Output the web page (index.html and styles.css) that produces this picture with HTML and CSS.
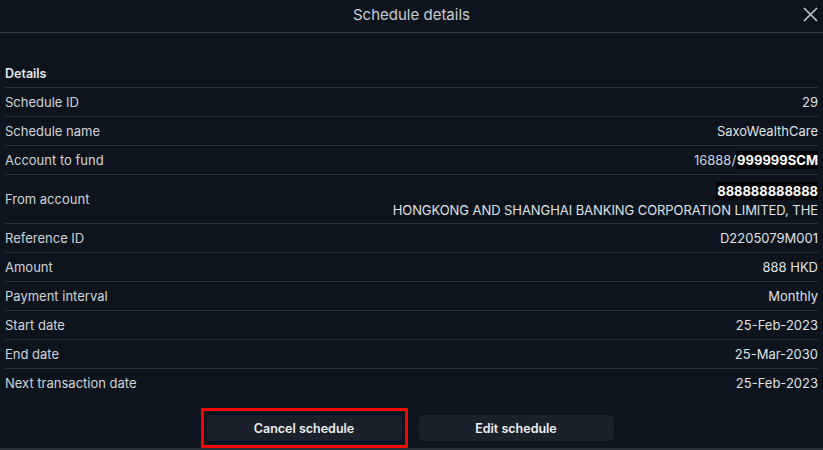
FILE: index.html
```html
<!DOCTYPE html>
<html>
<head>
<meta charset="utf-8">
<link rel="stylesheet" href="styles.css">
</head>
<body>
<div class="dialog">
  <header class="head">
    <div class="title">Schedule details</div>
    <button class="close" aria-label="Close">
      <svg width="15" height="15" viewBox="0 0 15 15"><path d="M1 1L14 14M14 1L1 14" stroke="#c4c8ce" stroke-width="1.6" fill="none"/></svg>
    </button>
  </header>
  <div class="body">
    <div class="row section"><span class="label">Details</span></div>
    <div class="row"><span class="label">Schedule ID</span><span class="value">29</span></div>
    <div class="row"><span class="label">Schedule name</span><span class="value">SaxoWealthCare</span></div>
    <div class="row"><span class="label">Account to fund</span><span class="value"><span class="acct">16888/</span><mark class="redact">999999SCM</mark></span></div>
    <div class="row tall"><span class="label">From account</span><span class="value multi"><mark class="redact">888888888888</mark><span>HONGKONG AND SHANGHAI BANKING CORPORATION LIMITED, THE</span></span></div>
    <div class="row"><span class="label">Reference ID</span><span class="value">D2205079M001</span></div>
    <div class="row"><span class="label">Amount</span><span class="value">888 HKD</span></div>
    <div class="row"><span class="label">Payment interval</span><span class="value">Monthly</span></div>
    <div class="row"><span class="label">Start date</span><span class="value">25-Feb-2023</span></div>
    <div class="row"><span class="label">End date</span><span class="value">25-Mar-2030</span></div>
    <div class="row last"><span class="label">Next transaction date</span><span class="value">25-Feb-2023</span></div>
  </div>
  <footer class="actions">
    <div class="highlight"><button class="btn">Cancel schedule</button></div>
    <button class="btn">Edit schedule</button>
  </footer>
</div>
</body>
</html>
```
FILE: styles.css
```css
html, body {
  margin: 0;
  padding: 0;
  background: #0e141d;
}
body {
  font-family: Inter, "Noto Sans", sans-serif;
  color: #d3d7dd;
  width: 823px;
  height: 450px;
  overflow: hidden;
}
.dialog {
  display: flex;
  flex-direction: column;
  height: 450px;
}
.head {
  position: relative;
  height: 32px;
  border-bottom: 1px solid #343a43;
  display: flex;
  align-items: center;
  justify-content: center;
}
.title {
  font-size: 15px;
  color: #c9cdd3;
  margin-top: -4px;
}
.close {
  position: absolute;
  right: 5px;
  top: 7px;
  background: none;
  border: 0;
  padding: 0;
  width: 15px;
  height: 15px;
  display: flex;
}
.body {
  padding: 26px 5px 0 5px;
}
.row {
  display: flex;
  justify-content: space-between;
  align-items: center;
  height: 28px;
  border-bottom: 1px solid #2a3039;
  font-size: 13px;
}
.row.tall {
  height: 48px;
}
.row.last {
  border-bottom: 0;
}
.section .label {
  font-weight: 600;
  color: #e6e9ed;
  font-size: 12.5px;
}
.label {
  color: #d0d4da;
}
.value {
  color: #dfe2e6;
  text-align: right;
}
.acct {
  color: #c9d3e0;
}
.value.multi {
  display: flex;
  flex-direction: column;
  align-items: flex-end;
  gap: 2px;
  margin-top: 1px;
  letter-spacing: -0.07px;
}
.redact {
  background: #000;
  color: #fff;
  font-weight: 700;
  padding: 1px 0 1px 1px;
}
.actions {
  margin-top: auto;
  height: 47px;
  border-bottom: 2px solid #2b313a;
  display: flex;
  justify-content: center;
  align-items: flex-start;
  gap: 11px;
  padding-top: 5px;
  box-sizing: border-box;
  margin-left: -9px;
}
.highlight {
  border: 3px solid #ff0000;
  padding: 4px 3px;
  height: 26px;
  box-sizing: content-box;
}
.btn {
  width: 195px;
  height: 26px;
  border: 0;
  border-radius: 4px;
  background: #1b212a;
  color: #eef0f3;
  font-family: Inter, "Noto Sans", sans-serif;
  font-weight: 600;
  font-size: 12.5px;
  padding: 0;
}
.actions > .btn {
  margin-top: 7px;
}
```
